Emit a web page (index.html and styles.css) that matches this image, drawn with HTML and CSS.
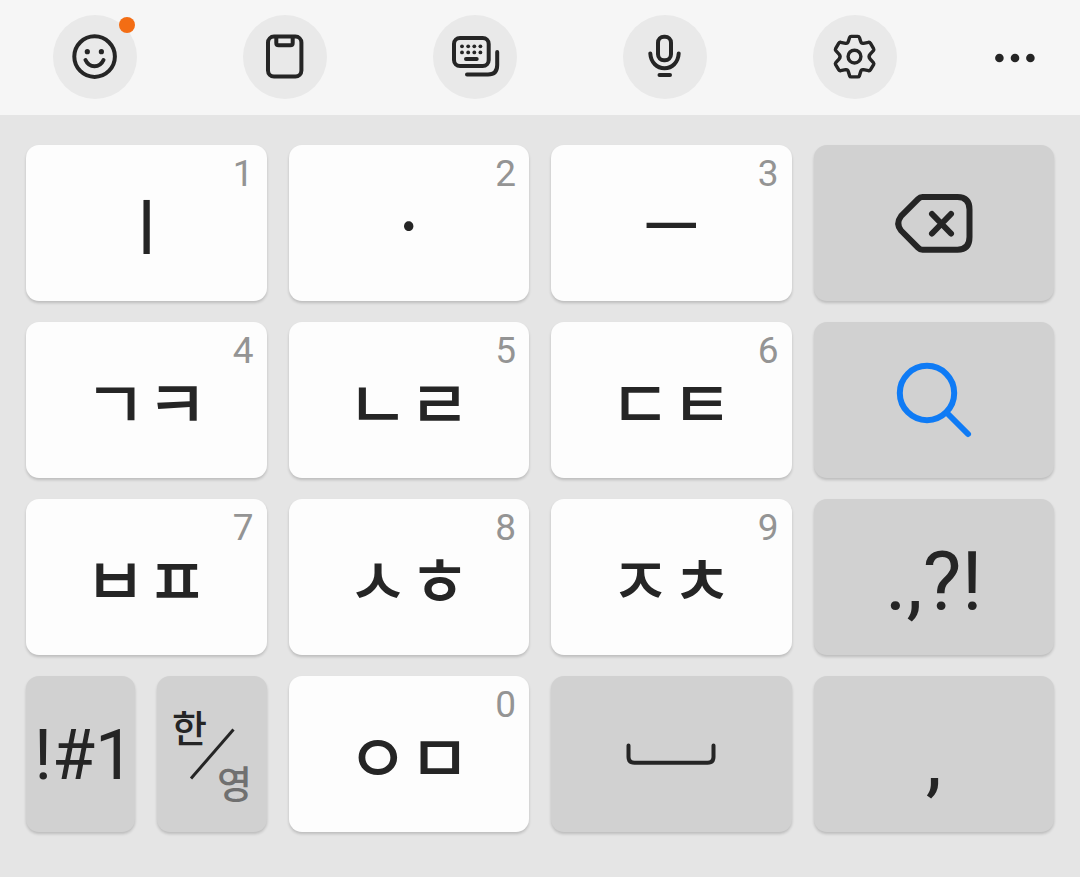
FILE: index.html
```html
<!DOCTYPE html>
<html lang="ko">
<head>
<meta charset="utf-8">
<meta name="viewport" content="width=device-width, initial-scale=1">
<title>천지인 키보드</title>
<link rel="stylesheet" href="styles.css">
</head>
<body>
<main class="keyboard">
  <div class="toolbar" role="toolbar" aria-label="도구 모음">
    <button class="tool" type="button" aria-label="이모티콘">
      <svg class="icon" viewBox="0 0 48 48">
        <circle cx="23.6" cy="23.6" r="20.3"/>
        <path d="M14.5 27C16.3 31 19.5 33.2 23.5 33.2S30.7 31 32.5 27"/>
        <g class="solid"><circle cx="16.3" cy="18.7" r="2.6"/><circle cx="30.4" cy="18.7" r="2.6"/></g>
      </svg>
      <span class="badge"></span>
    </button>
    <button class="tool" type="button" aria-label="클립보드">
      <svg class="icon" viewBox="0 0 48 48">
        <rect x="7" y="3.6" width="33.4" height="40" rx="6"/>
        <path d="M15.3 4V10Q15.3 12.3 17.6 12.3H29.4Q31.7 12.3 31.7 10V4"/>
      </svg>
    </button>
    <button class="tool" type="button" aria-label="키보드 전환">
      <svg class="icon" viewBox="0 0 48 48">
        <rect x="3" y="5" width="34.7" height="28" rx="6"/>
        <path d="M15 26H25.7M46.2 19V32Q46.2 41.5 37 41.5H16"/>
        <g class="solid">
          <circle cx="11" cy="13.3" r="1.9"/><circle cx="17.2" cy="13.3" r="1.9"/><circle cx="23.3" cy="13.3" r="1.9"/><circle cx="29.4" cy="13.3" r="1.9"/>
          <circle cx="11" cy="19.4" r="1.9"/><circle cx="17.2" cy="19.4" r="1.9"/><circle cx="23.3" cy="19.4" r="1.9"/><circle cx="29.4" cy="19.4" r="1.9"/>
        </g>
      </svg>
    </button>
    <button class="tool" type="button" aria-label="음성 입력">
      <svg class="icon" viewBox="0 0 48 48">
        <rect x="17" y="3.7" width="13" height="23.6" rx="6"/>
        <path d="M9.3 20.5C9.8 29.5 16 35.2 23.5 35.2S37.2 29.5 37.7 20.5M18.5 42H29"/>
      </svg>
    </button>
    <button class="tool" type="button" aria-label="설정">
      <svg class="icon icon-thin" viewBox="0 0 48 48">
        <path d="M20.2 3.4H26.8Q28 3.4 28.4 4.5L29.7 8.6Q30.3 10.6 32.4 10.3L37.6 9.3Q38.8 9.1 39.4 10.2L42.6 15.7Q43.2 16.8 42.4 17.7L39.2 21.1Q37 23.6 39.2 26.1L42.4 29.7Q43.2 30.6 42.6 31.7L39.4 36.9Q38.8 37.9 37.6 37.7L32.4 36.7Q30.3 36.4 29.7 38.4L28.4 42.8Q28 43.9 26.8 43.9H20.2Q19 43.9 18.6 42.8L17.3 38.4Q16.7 36.4 14.6 36.7L9.6 37.7Q8.4 37.9 7.8 36.9L4.6 31.7Q4 30.6 4.8 29.7L8 26.1Q10.2 23.6 8 21.1L4.8 17.7Q4 16.8 4.6 15.7L7.8 10.2Q8.4 9.1 9.6 9.3L14.6 10.3Q16.7 10.6 17.3 8.6L18.6 4.5Q19 3.4 20.2 3.4Z"/>
        <circle cx="23.5" cy="23.6" r="6.4"/>
      </svg>
    </button>
    <button class="tool tool-plain" type="button" aria-label="더보기">
      <svg class="icon solid" viewBox="0 0 48 48">
        <circle cx="8.4" cy="25" r="4.3"/><circle cx="24" cy="25" r="4.3"/><circle cx="39.4" cy="25" r="4.3"/>
      </svg>
    </button>
  </div>

  <div class="keys">
    <button class="key" type="button"><span class="hint">1</span><span class="jamo jamo-vowel">ㅣ</span></button>
    <button class="key" type="button"><span class="hint">2</span><span class="jamo jamo-vowel">·</span></button>
    <button class="key" type="button"><span class="hint">3</span><span class="jamo jamo-vowel">ㅡ</span></button>
    <button class="key key-fn" type="button" aria-label="지우기">
      <svg class="glyph glyph-delete" viewBox="0 0 80 64">
        <path d="M28.5 6H63.5Q75.5 6 75.5 18.5V46Q75.5 58.7 63.5 58.7H28.5Q26 58.7 24 56.6L7 39.5Q1.5 32.5 7 25.2L24 8.1Q26 6 28.5 6Z"/>
        <path d="M38 23L57 42.5M57 23L38 42.5"/>
      </svg>
    </button>

    <button class="key" type="button"><span class="hint">4</span><span class="jamo">ㄱㅋ</span></button>
    <button class="key" type="button"><span class="hint">5</span><span class="jamo">ㄴㄹ</span></button>
    <button class="key" type="button"><span class="hint">6</span><span class="jamo">ㄷㅌ</span></button>
    <button class="key key-fn" type="button" aria-label="검색">
      <svg class="glyph glyph-search" viewBox="0 0 80 80">
        <circle cx="33" cy="33" r="27.2"/><path d="M53 53L74 74"/>
      </svg>
    </button>

    <button class="key" type="button"><span class="hint">7</span><span class="jamo">ㅂㅍ</span></button>
    <button class="key" type="button"><span class="hint">8</span><span class="jamo">ㅅㅎ</span></button>
    <button class="key" type="button"><span class="hint">9</span><span class="jamo">ㅈㅊ</span></button>
    <button class="key key-fn key-punct" type="button">.,?!</button>

    <div class="key-pair">
      <button class="key key-fn key-symbols" type="button">!#1</button>
      <button class="key key-fn" type="button" aria-label="한/영 전환">
        <span class="lang">
          <span class="lang-ko">한</span>
          <svg class="lang-slash" viewBox="0 0 46 52"><path d="M2 50.5L44.5 1.5"/></svg>
          <span class="lang-en">영</span>
        </span>
      </button>
    </div>
    <button class="key" type="button"><span class="hint">0</span><span class="jamo">ㅇㅁ</span></button>
    <button class="key key-fn" type="button" aria-label="스페이스">
      <svg class="glyph glyph-space" viewBox="0 0 92 24">
        <path d="M3.5 3.5V15Q3.5 20.7 9.5 20.7H82.5Q88.5 20.7 88.5 15V3.5"/>
      </svg>
    </button>
    <button class="key key-fn key-punct" type="button">,</button>
  </div>
</main>
</body>
</html>
```
FILE: styles.css
```css
* {
  box-sizing: border-box;
}

body {
  margin: 0;
  background: #e5e5e5;
  color: #252525;
  font-family: Roboto, "Noto Sans CJK KR", sans-serif;
}

button {
  margin: 0;
  padding: 0;
  border: 0;
  color: inherit;
  font: inherit;
}

.toolbar {
  display: grid;
  grid-template-columns: repeat(5, 19fr) 13fr;
  align-items: center;
  justify-items: center;
  padding: 15px 0 16px;
  background: #f6f6f6;
}

.tool {
  position: relative;
  display: grid;
  place-items: center;
  width: 84px;
  height: 84px;
  border-radius: 50%;
  background: #e9e9e9;
}

.tool-plain {
  background: none;
}

.badge {
  position: absolute;
  top: 2px;
  right: 2px;
  width: 16px;
  height: 16px;
  border-radius: 50%;
  background: #f36d14;
}

svg {
  overflow: visible;
  fill: none;
  stroke: #252525;
  stroke-linecap: round;
  stroke-linejoin: round;
}

.icon {
  width: 48px;
  height: 48px;
  stroke-width: 4;
}

.icon-thin {
  stroke-width: 3.4;
}

.solid {
  fill: #252525;
  stroke: none;
}

.keys {
  display: grid;
  grid-template-columns: repeat(4, 1fr);
  grid-auto-rows: 156px;
  gap: 21px 22px;
  padding: 30px 26px 45px;
}

.key-pair {
  display: grid;
  grid-template-columns: 1fr 1fr;
  gap: 22px;
}

.key {
  position: relative;
  display: grid;
  place-items: center;
  border-radius: 13px;
  background: #fdfdfd;
  box-shadow: 0 2px 3px rgba(0, 0, 0, 0.18);
}

.key-fn {
  background: #d1d1d1;
}

.hint {
  position: absolute;
  top: 7px;
  right: 13px;
  color: #949494;
  font-size: 37px;
  line-height: 44px;
}

.jamo {
  font-family: "Noto Sans CJK KR", sans-serif;
  font-size: 67px;
  font-weight: 500;
  line-height: 76px;
}

.jamo-vowel {
  font-size: 60px;
}

.key-symbols {
  padding: 2px 0 0 7px;
  font-size: 70px;
}

.key-punct {
  padding-top: 10px;
  font-size: 82px;
}

.glyph-delete {
  width: 80px;
  stroke-width: 6;
}

.glyph-search {
  width: 80px;
  stroke: #0f7bf5;
  stroke-width: 6;
}

.glyph-space {
  width: 92px;
  stroke-width: 4;
}

.lang {
  display: grid;
  width: 80px;
  height: 96px;
  font-family: "Noto Sans CJK KR", sans-serif;
  font-size: 38px;
  font-weight: 500;
  line-height: 40px;
}

.lang > * {
  grid-area: 1 / 1;
}

.lang-ko {
  place-self: start;
}

.lang-en {
  place-self: end;
  color: #707070;
}

.lang-slash {
  place-self: center;
  width: 46px;
  stroke-width: 3;
  stroke-linecap: butt;
}
```
